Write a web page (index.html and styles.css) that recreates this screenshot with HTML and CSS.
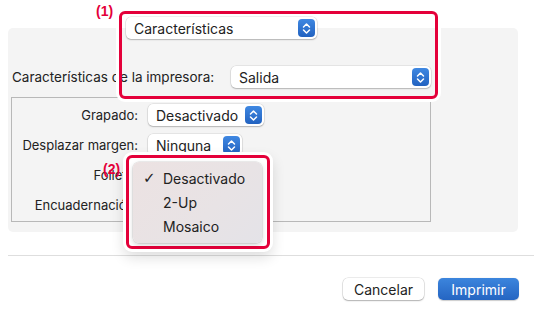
FILE: index.html
```html
<!DOCTYPE html>
<html lang="es">
<head>
<meta charset="utf-8">
<title>Imprimir</title>
<link rel="stylesheet" href="styles.css">
</head>
<body>
<div class="dialog">
  <div class="top-row">
    <div class="popup popup-top"><span>Características</span><span class="stepper"><svg viewBox="0 0 17 17"><path d="M5.5 7 L8.5 4 L11.5 7 M5.5 10 L8.5 13 L11.5 10" /></svg></span></div>
  </div>
  <div class="panel">
    <div class="printer-row">
      <span class="label">Características de la impresora:</span>
      <div class="popup popup-salida"><span>Salida</span><span class="stepper"><svg viewBox="0 0 17 17"><path d="M5.5 7 L8.5 4 L11.5 7 M5.5 10 L8.5 13 L11.5 10" /></svg></span></div>
    </div>
    <div class="inner-box">
      <span class="row-label">Grapado:</span>
      <div class="popup w-116"><span>Desactivado</span><span class="stepper"><svg viewBox="0 0 17 17"><path d="M5.5 7 L8.5 4 L11.5 7 M5.5 10 L8.5 13 L11.5 10" /></svg></span></div>
      <span class="row-label">Desplazar margen:</span>
      <div class="popup w-94"><span>Ninguna</span><span class="stepper"><svg viewBox="0 0 17 17"><path d="M5.5 7 L8.5 4 L11.5 7 M5.5 10 L8.5 13 L11.5 10" /></svg></span></div>
      <span class="row-label">Folleto:</span>
      <div class="popup w-116"><span>Desactivado</span><span class="stepper"><svg viewBox="0 0 17 17"><path d="M5.5 7 L8.5 4 L11.5 7 M5.5 10 L8.5 13 L11.5 10" /></svg></span></div>
      <span class="row-label">Encuadernación:</span>
      <div class="popup w-100"><span>Izquierda</span><span class="stepper"><svg viewBox="0 0 17 17"><path d="M5.5 7 L8.5 4 L11.5 7 M5.5 10 L8.5 13 L11.5 10" /></svg></span></div>
    </div>
  </div>
  <div class="separator"></div>
  <div class="buttons">
    <button class="btn btn-cancel">Cancelar</button>
    <button class="btn btn-print">Imprimir</button>
  </div>

  <div class="callout callout-1"></div>
  <span class="tag tag-1">(1)</span>
  <div class="callout callout-2">
    <div class="menu">
      <div class="menu-item"><span class="check">✓</span>Desactivado</div>
      <div class="menu-item"><span class="check"></span>2-Up</div>
      <div class="menu-item"><span class="check"></span>Mosaico</div>
    </div>
  </div>
  <span class="tag tag-2">(2)</span>
</div>
</body>
</html>
```

FILE: styles.css
```css
* { box-sizing: border-box; }
html, body {
  margin: 0;
  padding: 0;
  background: #ffffff;
}
body {
  width: 534px;
  height: 316px;
  overflow: hidden;
  font-family: Inter, "Liberation Sans", sans-serif;
  font-size: 14px;
  color: #222222;
}
.dialog {
  position: relative;
  width: 534px;
  height: 316px;
  padding-top: 17px;
}
.top-row {
  display: flex;
  padding-left: 126px;
  position: relative;
  z-index: 2;
}
.popup {
  display: flex;
  align-items: center;
  justify-content: space-between;
  height: 22px;
  padding: 0 2px 0 8px;
  background: #ffffff;
  border-radius: 5px;
  box-shadow: 0 0 0 0.5px rgba(0, 0, 0, 0.12), 0 1px 1.5px rgba(0, 0, 0, 0.22);
  color: #222222;
  white-space: nowrap;
}
.popup-top { width: 191px; }
.popup-salida { width: 200px; }
.w-116 { width: 116px; }
.w-94 { width: 94px; }
.w-100 { width: 100px; }
.stepper {
  width: 17px;
  height: 18px;
  border-radius: 4px;
  background: linear-gradient(#3f88e2, #2262c0);
  display: flex;
  align-items: center;
  justify-content: center;
  flex-shrink: 0;
}
.stepper svg {
  width: 17px;
  height: 17px;
  fill: none;
  stroke: #ffffff;
  stroke-width: 1.5;
  stroke-linecap: round;
  stroke-linejoin: round;
}
.panel {
  margin: -11px 16px 0 8px;
  height: 204px;
  background: #f4f4f4;
  border-radius: 5px;
  padding: 38px 0 0 3px;
  position: relative;
  z-index: 1;
}
.printer-row {
  display: flex;
  align-items: center;
  height: 22px;
}
.printer-row .label {
  width: 220px;
  padding-left: 1px;
  white-space: nowrap;
  font-size: 13.5px;
}
.inner-box {
  margin-top: 9px;
  width: 420px;
  height: 125px;
  border: 1px solid #b8b8b8;
  display: grid;
  grid-template-columns: 126px auto;
  grid-auto-rows: 22px;
  column-gap: 10px;
  row-gap: 8px;
  align-items: center;
  justify-items: start;
  padding-top: 6px;
}
.row-label {
  justify-self: end;
  white-space: nowrap;
  font-size: 13px;
}
.separator {
  margin: 23px 0 0 8px;
  height: 1px;
  background: #dedede;
}
.buttons {
  display: flex;
  justify-content: flex-end;
  gap: 14px;
  margin-top: 22px;
  padding-right: 15px;
}
.btn {
  width: 81px;
  height: 22px;
  border: none;
  border-radius: 5px;
  font-family: Inter, "Liberation Sans", sans-serif;
  font-size: 14px;
  padding: 0;
}
.btn-cancel {
  background: #ffffff;
  color: #222222;
  box-shadow: 0 0 0 0.5px rgba(0, 0, 0, 0.15), 0 1px 1.5px rgba(0, 0, 0, 0.25);
}
.btn-print {
  background: linear-gradient(#3c85dd, #2565c2);
  color: #ffffff;
  box-shadow: 0 0.5px 1px rgba(0, 0, 0, 0.2);
}
.callout {
  position: absolute;
  border: 3px solid #e4003a;
  border-radius: 6px;
  box-shadow: 0 0 0 3px #ffffff;
  z-index: 5;
}
.callout-1 {
  left: 119px;
  top: 11px;
  width: 319px;
  height: 88px;
}
.callout-2 {
  left: 126px;
  top: 155px;
  width: 144px;
  height: 94px;
  padding: 4px;
  background: #ffffff;
  box-shadow: 0 0 0 3px #ffffff, 0 6px 14px 2px rgba(0, 0, 0, 0.14);
}
.menu {
  width: 129px;
  height: 81px;
  border-radius: 6px;
  background: linear-gradient(135deg, #ece2e2, #e8e3e5 60%, #e4e3e8);
  box-shadow: 0 0 0 0.5px rgba(0, 0, 0, 0.12), 0 2px 5px rgba(0, 0, 0, 0.18);
  padding-top: 4px;
}
.menu-item {
  display: flex;
  align-items: center;
  height: 24px;
  color: #222222;
  padding-left: 10px;
}
.check {
  width: 20px;
  font-size: 15px;
  font-weight: 700;
  font-family: "DejaVu Sans", sans-serif;
}
.tag {
  position: absolute;
  color: #e4003a;
  font-weight: 700;
  font-size: 14px;
  font-family: "Liberation Sans", Arial, sans-serif;
  z-index: 6;
  line-height: 14px;
}
.tag-1 { left: 96px; top: 4px; }
.tag-2 { left: 103px; top: 162px; }
```
